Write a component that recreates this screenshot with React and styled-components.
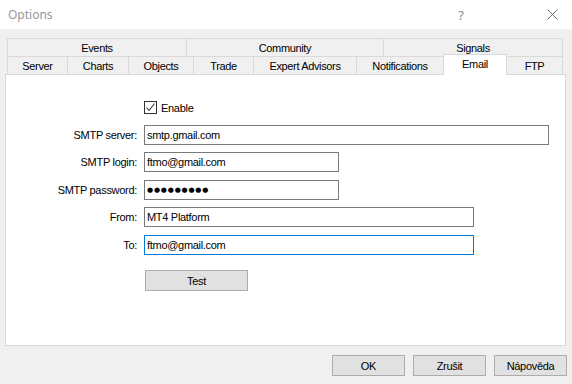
import React from "react";
import styled, { createGlobalStyle } from "styled-components";

const Global = createGlobalStyle`
  html, body { margin: 0; padding: 0; }
  body {
    width: 572px; height: 384px; overflow: hidden;
    background: #f0f0f0;
    font-family: "Liberation Sans", Arial, sans-serif;
    font-size: 11px; color: #000;
  }
`;

const Window = styled.div`
  width: 572px; height: 384px;
  display: flex; flex-direction: column;
  background: #f0f0f0;
`;

const TitleBar = styled.div`
  height: 29px; flex: none;
  background: #fff;
  display: flex; align-items: center;
  padding-left: 8px;
`;

const Title = styled.div`
  flex: 1;
  font-family: "Noto Sans", "Open Sans", sans-serif;
  font-size: 12px; color: #999;
`;

const TitleBtn = styled.div`
  width: ${p => p.$w}px; height: 29px;
  margin-right: ${p => p.$mr || 0}px;
  display: flex; align-items: center; justify-content: center;
  color: #8a8a8a;
  font-family: "Noto Sans", sans-serif; font-size: 13px;
`;

const Body = styled.div`
  flex: 1;
  display: flex; flex-direction: column;
  padding: 9px 6px 0 5px;
`;

const TabStrip = styled.div`
  margin: 0 3px 0 2px;
  display: flex; flex-direction: column;
`;

const TabRow = styled.div`
  display: flex;
  height: 18px;
`;

const Tab = styled.div`
  width: ${p => p.$w}px;
  box-sizing: border-box;
  flex: none;
  display: flex; align-items: center; justify-content: center;
  border-top: 1px solid #d9d9d9;
  border-left: ${p => (p.$first ? "1px solid #d9d9d9" : "none")};
  border-right: 1px solid #d9d9d9;
  background: #f0f0f0;
  padding-top: 1px;
  letter-spacing: -0.35px;
`;

const ActiveTab = styled(Tab)`
  background: #fff;
  height: 21px;
  margin-top: -2px;
  margin-left: -1px;
  width: ${p => p.$w + 1}px;
  border-left: 1px solid #d9d9d9;
  padding-top: 0; padding-bottom: 3px;
  position: relative; z-index: 1;
`;

const Panel = styled.div`
  height: 272px; box-sizing: border-box;
  background: #fff;
  border: 1px solid #d9d9d9;
  padding: 26px 0 0 0;
`;

const Form = styled.div`
  display: grid;
  grid-template-columns: 131px auto;
  column-gap: 7px;
  row-gap: 7.5px;
  align-items: center;
  justify-items: start;
`;

const Label = styled.div`
  justify-self: end;
  letter-spacing: -0.3px;
`;

const CheckRow = styled.div`
  grid-column: 2;
  display: flex; align-items: center; gap: 4px;
  margin-bottom: 3px;
  letter-spacing: -0.3px;
`;

const Box = styled.div`
  width: 13px; height: 13px; box-sizing: border-box;
  border: 1px solid #333;
  background: #fff;
  display: flex; align-items: center; justify-content: center;
`;

const Field = styled.input`
  width: ${p => p.$w}px; height: 20px; box-sizing: border-box;
  border: 1px solid ${p => (p.$focus ? "#0078d7" : "#7a7a7a")};
  padding: 0 2px; margin: 0;
  font-family: "Liberation Sans", Arial, sans-serif;
  font-size: 11px; color: #000;
  letter-spacing: -0.3px;
  outline: none; background: #fff;
`;

const Dots = styled(Field)`
  font-family: "DejaVu Sans", sans-serif;
  font-size: 7px;
  letter-spacing: 0.8px;
  padding-left: 2px;
`;

const Button = styled.div`
  width: ${p => p.$w}px; height: 21px; box-sizing: border-box;
  border: 1px solid #adadad;
  background: #e1e1e1;
  display: flex; align-items: center; justify-content: center;
  letter-spacing: -0.3px;
`;

const TestWrap = styled.div`
  grid-column: 2;
  margin-top: 8px;
  margin-left: 1px;
`;

const Footer = styled.div`
  display: flex; justify-content: flex-end; gap: 8px;
  margin-top: 9px; margin-right: -1px;
`;

const rows1 = [
  ["Events", 180],
  ["Community", 197],
  ["Signals", 179],
];
const rows2 = [
  ["Server", 61],
  ["Charts", 61],
  ["Objects", 65],
  ["Trade", 60],
  ["Expert Advisors", 103],
  ["Notifications", 87],
  ["Email", 63],
  ["FTP", 56],
];

export default function App() {
  return (
    <Window>
      <Global />
      <TitleBar>
        <Title>Options</Title>
        <TitleBtn $w={46} $mr={48}>?</TitleBtn>
        <TitleBtn $w={40}>
          <svg width="11" height="11" viewBox="0 0 11 11">
            <path d="M0.5 0.5 L10.5 10.5 M10.5 0.5 L0.5 10.5" stroke="#6e6e6e" strokeWidth="1" />
          </svg>
        </TitleBtn>
      </TitleBar>
      <Body>
        <TabStrip>
          <TabRow>
            {rows1.map(([t, w], i) => (
              <Tab key={t} $w={w} $first={i === 0}>{t}</Tab>
            ))}
          </TabRow>
          <TabRow>
            {rows2.map(([t, w], i) =>
              t === "Email" ? (
                <ActiveTab key={t} $w={w}>{t}</ActiveTab>
              ) : (
                <Tab key={t} $w={w} $first={i === 0}>{t}</Tab>
              )
            )}
          </TabRow>
        </TabStrip>
        <Panel>
          <Form>
            <CheckRow>
              <Box>
                <svg width="11" height="11" viewBox="0 0 11 11">
                  <path d="M1.5 5.5 L4 8.5 L9.5 1.5" fill="none" stroke="#333" strokeWidth="1.1" />
                </svg>
              </Box>
              Enable
            </CheckRow>
            <Label>SMTP server:</Label>
            <Field $w={405} readOnly defaultValue="smtp.gmail.com" />
            <Label>SMTP login:</Label>
            <Field $w={195} readOnly defaultValue="ftmo@gmail.com" />
            <Label>SMTP password:</Label>
            <Dots $w={195} readOnly defaultValue="●●●●●●●●●" />
            <Label>From:</Label>
            <Field $w={330} readOnly defaultValue="MT4 Platform" />
            <Label>To:</Label>
            <Field $w={330} $focus readOnly defaultValue="ftmo@gmail.com" />
            <TestWrap>
              <Button $w={103}>Test</Button>
            </TestWrap>
          </Form>
        </Panel>
        <Footer>
          <Button $w={73}>OK</Button>
          <Button $w={73}>Zrušit</Button>
          <Button $w={73}>Nápověda</Button>
        </Footer>
      </Body>
    </Window>
  );
}
